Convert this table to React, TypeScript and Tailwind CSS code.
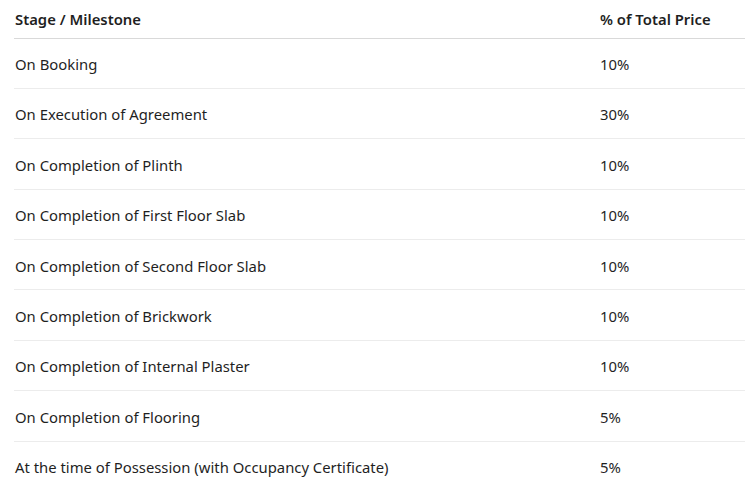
const rows: [string, string][] = [
  ['On Booking', '10%'],
  ['On Execution of Agreement', '30%'],
  ['On Completion of Plinth', '10%'],
  ['On Completion of First Floor Slab', '10%'],
  ['On Completion of Second Floor Slab', '10%'],
  ['On Completion of Brickwork', '10%'],
  ['On Completion of Internal Plaster', '10%'],
  ['On Completion of Flooring', '5%'],
  ['At the time of Possession (with Occupancy Certificate)', '5%'],
];

export default function App() {
  return (
    <div className="bg-white min-h-screen pl-[14px] text-[14.85px] text-[#1f1f1f]" style={{ fontFamily: "'Noto Sans', 'Open Sans', sans-serif" }}>
      <table className="w-full border-collapse text-left">
        <thead>
          <tr className="h-[38px] border-b border-[#d9d9d9]">
            <th className="pl-[1px] pt-[1px] font-semibold">Stage / Milestone</th>
            <th className="w-[145px] pt-[1px] font-semibold">% of Total Price</th>
          </tr>
        </thead>
        <tbody>
          {rows.map(([stage, pct], i) => (
            <tr key={stage} className={`h-[50.4px] ${i < rows.length - 1 ? 'border-b border-[#ececec]' : ''}`}>
              <td className="pl-[1px] pt-[2px]">{stage}</td>
              <td className="pt-[2px]">{pct}</td>
            </tr>
          ))}
        </tbody>
      </table>
    </div>
  );
}
